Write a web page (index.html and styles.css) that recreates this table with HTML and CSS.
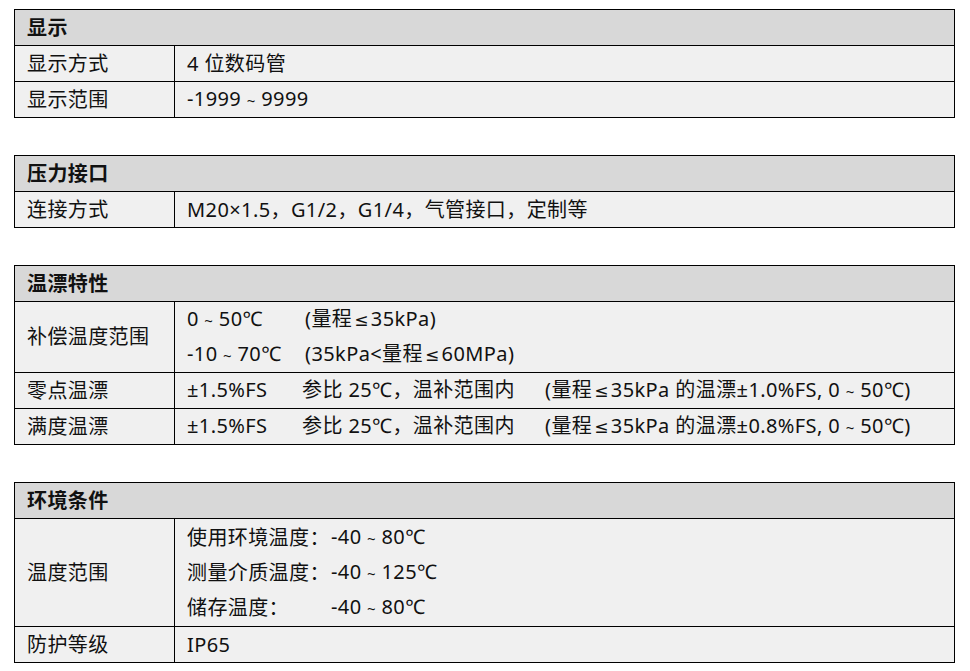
FILE: index.html
```html
<!DOCTYPE html>
<html lang="zh-CN">
<head>
<meta charset="utf-8">
<link rel="stylesheet" href="styles.css">
</head>
<body>
<div class="page">
  <table class="spec">
    <colgroup><col class="col-key"><col class="col-val"></colgroup>
    <tr class="head"><th colspan="2">显示</th></tr>
    <tr><td class="key">显示方式</td><td>4 位数码管</td></tr>
    <tr><td class="key">显示范围</td><td>-1999<span class="t">~</span>9999</td></tr>
  </table>

  <table class="spec">
    <colgroup><col class="col-key"><col class="col-val"></colgroup>
    <tr class="head"><th colspan="2">压力接口</th></tr>
    <tr><td class="key">连接方式</td><td>M20×1.5，G1/2，G1/4，气管接口，定制等</td></tr>
  </table>

  <table class="spec">
    <colgroup><col class="col-key"><col class="col-val"></colgroup>
    <tr class="head"><th colspan="2">温漂特性</th></tr>
    <tr class="multi">
      <td class="key">补偿温度范围</td>
      <td>
        <div class="line"><span class="c1">0<span class="t">~</span>50℃</span><span>(量程<span class="le">≤</span>35kPa)</span></div>
        <div class="line"><span class="c1">-10<span class="t">~</span>70℃</span><span>(35kPa&lt;量程<span class="le">≤</span>60MPa)</span></div>
      </td>
    </tr>
    <tr><td class="key">零点温漂</td><td><span class="d1">±1.5%FS</span><span class="d2">参比 25℃，温补范围内</span><span>(量程<span class="le">≤</span>35kPa 的温漂±1.0%FS, 0<span class="t">~</span>50℃)</span></td></tr>
    <tr><td class="key">满度温漂</td><td><span class="d1">±1.5%FS</span><span class="d2">参比 25℃，温补范围内</span><span>(量程<span class="le">≤</span>35kPa 的温漂±0.8%FS, 0<span class="t">~</span>50℃)</span></td></tr>
  </table>

  <table class="spec">
    <colgroup><col class="col-key"><col class="col-val"></colgroup>
    <tr class="head"><th colspan="2">环境条件</th></tr>
    <tr class="multi env">
      <td class="key">温度范围</td>
      <td>
        <div class="line"><span class="e1">使用环境温度：</span><span>-40<span class="t">~</span>80℃</span></div>
        <div class="line"><span class="e1">测量介质温度：</span><span>-40<span class="t">~</span>125℃</span></div>
        <div class="line"><span class="e1">储存温度：</span><span>-40<span class="t">~</span>80℃</span></div>
      </td>
    </tr>
    <tr><td class="key">防护等级</td><td>IP65</td></tr>
  </table>
</div>
</body>
</html>
```

FILE: styles.css
```css
html, body {
  margin: 0;
  padding: 0;
  background: #ffffff;
}

.page {
  padding: 9px 15px 0 14px;
  font-family: "Noto Sans", "Noto Sans CJK SC", sans-serif;
  font-size: 20px;
  letter-spacing: 0.4px;
  color: #111111;
}

.spec {
  width: 941px;
  border-collapse: collapse;
  margin-bottom: 37px;
  table-layout: fixed;
}

.col-key { width: 160px; }

.spec th,
.spec td {
  border: 1px solid #000000;
  padding: 0 12px;
  height: 35px;
  line-height: 28px;
  text-align: left;
  vertical-align: middle;
  white-space: nowrap;
}

.spec .head th {
  background: #d8d8d8;
  font-weight: 700;
}

.spec td {
  background: #f0f0f0;
  font-weight: 400;
}

.env td {
  padding-top: 1px;
  padding-bottom: 1px;
}

.line {
  display: flex;
  align-items: center;
  height: 35px;
}

.t {
  display: inline-block;
  width: 20px;
  text-align: center;
  font-size: 15px;
}

.le {
  font-family: "DejaVu Sans", sans-serif;
  font-size: 17px;
  padding: 0 2px;
}

.c1 { display: inline-block; width: 118px; }
.d1 { display: inline-block; width: 115px; }
.d2 { display: inline-block; width: 243px; }
.e1 { display: inline-block; width: 144px; }
```
